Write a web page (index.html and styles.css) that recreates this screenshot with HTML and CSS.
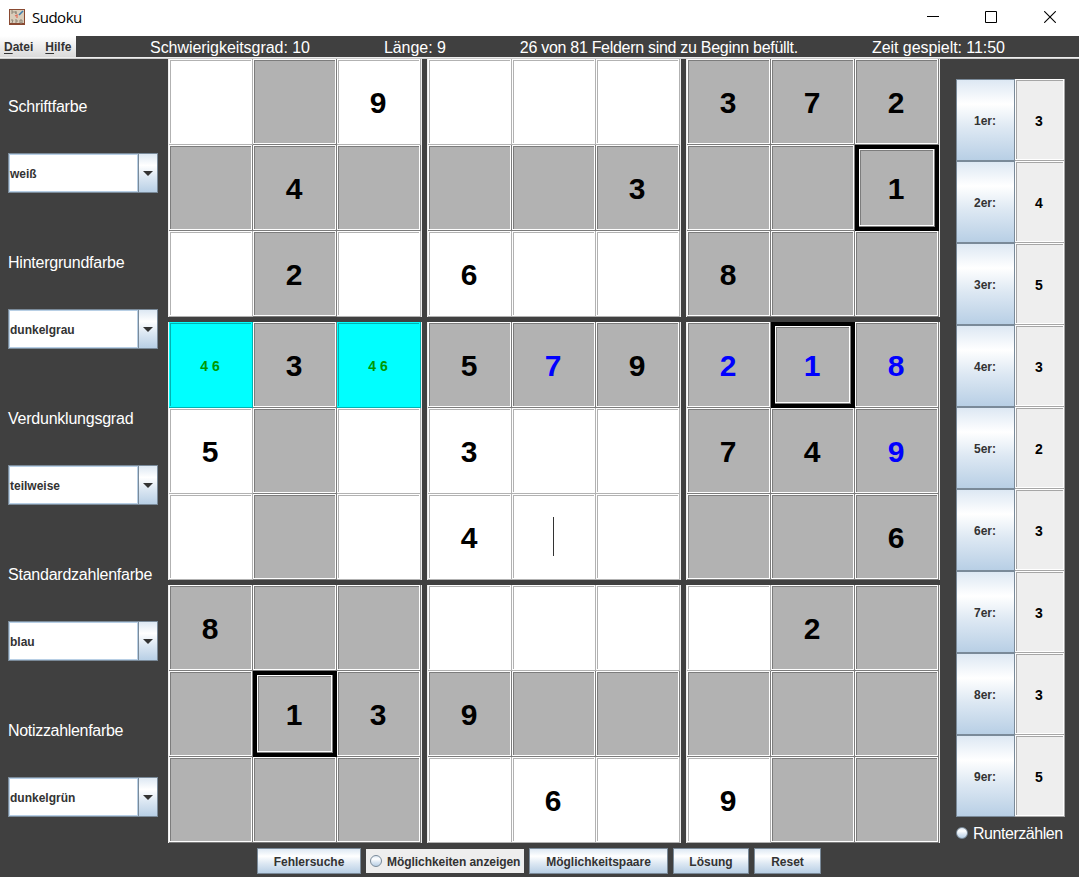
FILE: index.html
```html
<!DOCTYPE html>
<html lang="de">
<head>
<meta charset="utf-8">
<title>Sudoku</title>
<link rel="stylesheet" href="styles.css">
</head>
<body>
<div class="window">
  <header class="titlebar">
    <svg class="app-icon" width="16" height="16" viewBox="0 0 16 16">
      <rect width="16" height="16" fill="#8a4a32"/>
      <rect x="1" y="1" width="14" height="13" fill="#d9cdbb"/>
      <path d="M2 2h2v2h-2M6 2v2h2M7 2v3M2 11h2l-1 3M6 11h2v2h-2M11 11h2v3h-2z" fill="none" stroke="#8d8577" stroke-width="1"/>
      <path d="M6 7l2-1v3" fill="none" stroke="#e0705c" stroke-width="1.2"/>
      <path d="M14 2L10 6" stroke="#3f7fae" stroke-width="1.6"/>
    </svg>
    <span class="title">Sudoku</span>
    <div class="controls">
      <svg width="12" height="12" viewBox="0 0 12 12"><path d="M0 5.5h12" stroke="#000"/></svg>
      <svg width="12" height="12" viewBox="0 0 12 12"><path d="M.5.5h11v11H.5z" fill="none" stroke="#000"/></svg>
      <svg width="12" height="12" viewBox="0 0 12 12"><path d="M.2.2l11.6 11.6M11.8.2L.2 11.8" stroke="#000" stroke-width="1.1"/></svg>
    </div>
  </header>

  <nav class="menubar">
    <div class="menus"><span class="menu"><u>D</u>atei</span><span class="menu"><u>H</u>ilfe</span></div>
    <div class="status">
      <span class="level">Schwierigkeitsgrad: 10</span>
      <span class="length">Länge: 9</span>
      <span class="filled">26 von 81 Feldern sind zu Beginn befüllt.</span>
      <span class="level">Zeit gespielt: 11:50</span>
    </div>
  </nav>

  <div class="content">
    <aside class="settings">
      <div class="setting"><label>Schriftfarbe</label><div class="combo"><span>weiß</span><b><svg width="10" height="5" viewBox="0 0 10 5"><path d="M0 0h10L5 5z" fill="#333"/></svg></b></div></div>
      <div class="setting"><label>Hintergrundfarbe</label><div class="combo"><span>dunkelgrau</span><b><svg width="10" height="5" viewBox="0 0 10 5"><path d="M0 0h10L5 5z" fill="#333"/></svg></b></div></div>
      <div class="setting"><label>Verdunklungsgrad</label><div class="combo"><span>teilweise</span><b><svg width="10" height="5" viewBox="0 0 10 5"><path d="M0 0h10L5 5z" fill="#333"/></svg></b></div></div>
      <div class="setting"><label>Standardzahlenfarbe</label><div class="combo"><span>blau</span><b><svg width="10" height="5" viewBox="0 0 10 5"><path d="M0 0h10L5 5z" fill="#333"/></svg></b></div></div>
      <div class="setting"><label class="tight">Notizzahlenfarbe</label><div class="combo"><span>dunkelgrün</span><b><svg width="10" height="5" viewBox="0 0 10 5"><path d="M0 0h10L5 5z" fill="#333"/></svg></b></div></div>
    </aside>

    <main class="board">
      <section class="block">
        <div class="cell"></div><div class="cell dark"></div><div class="cell">9</div>
        <div class="cell dark"></div><div class="cell dark">4</div><div class="cell dark"></div>
        <div class="cell"></div><div class="cell dark">2</div><div class="cell"></div>
      </section>
      <section class="block">
        <div class="cell"></div><div class="cell"></div><div class="cell"></div>
        <div class="cell dark"></div><div class="cell dark"></div><div class="cell dark">3</div>
        <div class="cell">6</div><div class="cell"></div><div class="cell"></div>
      </section>
      <section class="block">
        <div class="cell dark">3</div><div class="cell dark">7</div><div class="cell dark">2</div>
        <div class="cell dark"></div><div class="cell dark"></div><div class="cell dark framed">1</div>
        <div class="cell dark">8</div><div class="cell dark"></div><div class="cell dark"></div>
      </section>
      <section class="block">
        <div class="cell note">4 6</div><div class="cell dark">3</div><div class="cell note">4 6</div>
        <div class="cell">5</div><div class="cell dark"></div><div class="cell"></div>
        <div class="cell"></div><div class="cell dark"></div><div class="cell"></div>
      </section>
      <section class="block">
        <div class="cell dark">5</div><div class="cell dark user">7</div><div class="cell dark">9</div>
        <div class="cell">3</div><div class="cell"></div><div class="cell"></div>
        <div class="cell">4</div><div class="cell"><span class="caret"></span></div><div class="cell"></div>
      </section>
      <section class="block">
        <div class="cell dark user">2</div><div class="cell dark user framed">1</div><div class="cell dark user">8</div>
        <div class="cell dark">7</div><div class="cell dark">4</div><div class="cell dark user">9</div>
        <div class="cell dark"></div><div class="cell dark"></div><div class="cell dark">6</div>
      </section>
      <section class="block">
        <div class="cell dark">8</div><div class="cell dark"></div><div class="cell dark"></div>
        <div class="cell dark"></div><div class="cell dark framed">1</div><div class="cell dark">3</div>
        <div class="cell dark"></div><div class="cell dark"></div><div class="cell dark"></div>
      </section>
      <section class="block">
        <div class="cell"></div><div class="cell"></div><div class="cell"></div>
        <div class="cell dark">9</div><div class="cell dark"></div><div class="cell dark"></div>
        <div class="cell"></div><div class="cell">6</div><div class="cell"></div>
      </section>
      <section class="block">
        <div class="cell"></div><div class="cell dark">2</div><div class="cell dark"></div>
        <div class="cell dark"></div><div class="cell dark"></div><div class="cell dark"></div>
        <div class="cell">9</div><div class="cell dark"></div><div class="cell dark"></div>
      </section>
    </main>

    <aside class="counter">
      <div class="counts">
        <div class="btn">1er:</div><div class="count">3</div>
        <div class="btn">2er:</div><div class="count">4</div>
        <div class="btn">3er:</div><div class="count">5</div>
        <div class="btn">4er:</div><div class="count">3</div>
        <div class="btn">5er:</div><div class="count">2</div>
        <div class="btn">6er:</div><div class="count">3</div>
        <div class="btn">7er:</div><div class="count">3</div>
        <div class="btn">8er:</div><div class="count">3</div>
        <div class="btn">9er:</div><div class="count">5</div>
      </div>
      <div class="countdown"><i class="radio"></i><span>Runterzählen</span></div>
    </aside>
  </div>

  <footer class="actions">
    <div class="btn check">Fehlersuche</div>
    <div class="option"><i class="radio"></i><span>Möglichkeiten anzeigen</span></div>
    <div class="btn pairs">Möglichkeitspaare</div>
    <div class="btn solve">Lösung</div>
    <div class="btn reset">Reset</div>
  </footer>
</div>
</body>
</html>
```
FILE: styles.css
```css
* { box-sizing: border-box; }

body {
  margin: 0;
  background: #404040;
  font-family: "Liberation Sans", Arial, sans-serif;
  overflow: hidden;
}

.window {
  width: 1079px;
  height: 877px;
  display: flex;
  flex-direction: column;
}

.titlebar {
  height: 36px;
  flex: none;
  background: #fff;
  display: flex;
  align-items: center;
  padding: 0 23px 2px 9px;
}
.app-icon { display: block; }
.title {
  font: 15px/20px "Open Sans", "Noto Sans", sans-serif;
  letter-spacing: -0.5px;
  margin-left: 7px;
  color: #000;
}
.controls { margin-left: auto; display: flex; gap: 46px; }
.controls svg { display: block; }
.controls svg:nth-child(2) { margin-right: 1px; }

.menubar {
  height: 23px;
  flex: none;
  display: flex;
  border-bottom: 1px solid #ccc;
  box-shadow: inset 0 -1px #eee;
}
.menus {
  width: 76px;
  height: 21px;
  padding-left: 4px;
  display: flex;
  gap: 12px;
  background: linear-gradient(#fff, #dadada);
  font: bold 12px/23px "Liberation Sans", Arial, sans-serif;
  color: #333;
}
.menu u { text-underline-offset: 2px; text-decoration-thickness: 1px; }
.status {
  flex: 1;
  height: 21px;
  display: flex;
  justify-content: space-evenly;
  font-size: 16px;
  line-height: 24px;
  color: #fff;
  white-space: nowrap;
}
.level, .length { letter-spacing: -0.05px; }
.filled { letter-spacing: -0.29px; }

.content { display: flex; height: 784px; flex: none; }

.settings { width: 168px; padding: 0 10px 0 8px; }
.setting { height: 156px; padding-top: 38px; }
.setting label {
  display: block;
  height: 56px;
  font-size: 16px;
  line-height: 20px;
  letter-spacing: -0.23px;
  color: #fff;
}
.setting .tight { letter-spacing: -0.31px; }
.combo {
  height: 40px;
  display: flex;
  border: 1px solid #7a8a99;
}
.combo span {
  flex: 1;
  background: #fff;
  border: 1px solid #b8cfe5;
  font-size: 12px;
  font-weight: bold;
  line-height: 38px;
  color: #333;
}
.combo b {
  width: 19px;
  border-left: 1px solid #7a8a99;
  display: flex;
  align-items: center;
  justify-content: center;
  padding-top: 1px;
}
.combo b, .btn { background: linear-gradient(#dde8f3, #fff 30%, #dde8f3 60%, #b8cfe5); }

.board {
  display: grid;
  grid-template-columns: repeat(3, 254px);
  grid-template-rows: repeat(3, 258px);
  gap: 5px;
  width: 772px;
}
.block {
  display: grid;
  grid-template-columns: repeat(3, 84px);
  grid-template-rows: repeat(3, 86px);
  padding: 0 1px;
  background: #eee;
}

/* Raised etched edge: light frame with a dark line inside and outside */
.cell, .count {
  --light: #fff;
  --shade: #b2b2b2;
  display: flex;
  align-items: center;
  justify-content: center;
  padding-right: 2px;
  font-weight: bold;
  color: #000;
  background: #fff;
  box-shadow:
    inset -1px -1px var(--shade),
    inset 1px 1px var(--light),
    inset -2px -2px var(--light),
    inset 2px 2px var(--shade);
}
.cell { font-size: 30px; line-height: 34px; padding-top: 1px; }
.dark { --shade: #7c7c7c; --light: #fefefe; background: #b2b2b2; }
.note {
  --light: #0ff;
  --shade: #00b2b2;
  background: #0ff;
  color: #009900;
  font-size: 14px;
  line-height: 16px;
  padding-top: 2px;
}
.user { color: #00f; }
.framed { border: 4px solid #000; }
.caret { width: 1px; height: 39px; margin-bottom: 2px; background: #333; }

.counter { padding: 20px 0 0 16px; }
.counts {
  display: grid;
  grid-template-columns: 59px 50px;
  grid-auto-rows: 82px;
}
.btn {
  border: 1px solid #7a8a99;
  display: flex;
  align-items: center;
  justify-content: center;
  padding-top: 2px;
  font-size: 12px;
  font-weight: bold;
  color: #333;
}
.counts .btn { padding-right: 1px; }
.count { --shade: #a6a6a6; background: #eee; font-size: 14px; padding-top: 2px; }
.countdown {
  display: flex;
  align-items: center;
  gap: 5px;
  height: 32px;
  font-size: 16px;
  letter-spacing: -0.46px;
  color: #fff;
}
.countdown span { padding-top: 2px; }

.radio {
  width: 12px;
  height: 12px;
  border-radius: 50%;
  border: 1px solid #7a8a99;
  background: linear-gradient(#dde8f3, #fff 30%, #dde8f3 60%, #b8cfe5);
}
.countdown .radio { margin-bottom: 1px; }

.actions { display: flex; gap: 5px; padding: 5px 0 0 257px; }
.actions .btn { height: 26px; }
.check { width: 104px; }
.pairs { width: 139px; }
.solve { width: 76px; }
.reset { width: 67px; }
.option {
  width: 158px;
  height: 24px;
  margin-top: 1px;
  padding-left: 4px;
  background: #eee;
  display: flex;
  align-items: center;
  gap: 5px;
  font-size: 12px;
  font-weight: bold;
  letter-spacing: -0.06px;
  color: #333;
  white-space: nowrap;
}
.option span { padding-top: 2px; }
```
